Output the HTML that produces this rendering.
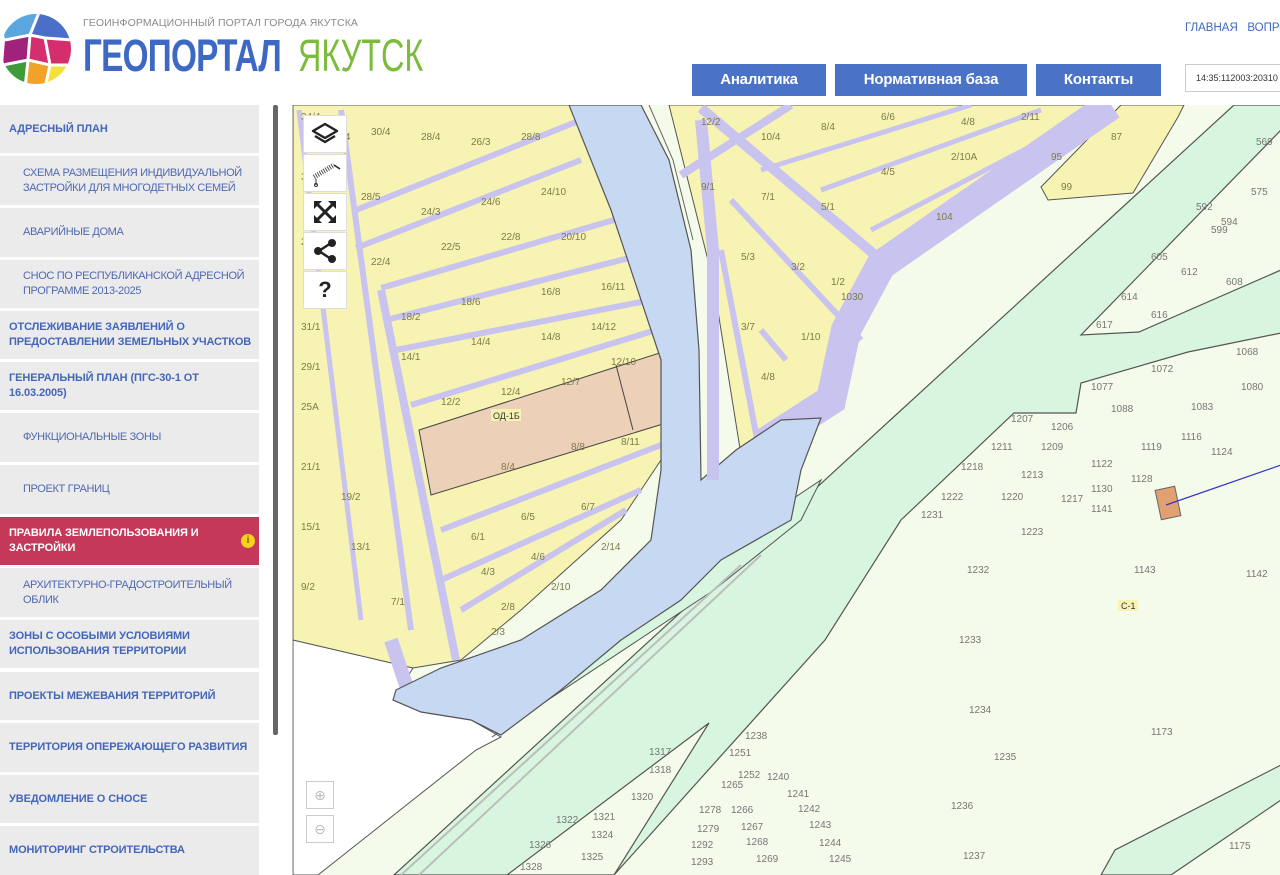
<!DOCTYPE html>
<html><head><meta charset="utf-8"><style>
*{margin:0;padding:0;box-sizing:border-box}
body{width:1280px;height:875px;overflow:hidden;background:#fff;font-family:"Liberation Sans","DejaVu Sans",sans-serif;position:relative}
.abs{position:absolute}
.sub{left:83px;top:17px;font-size:10.5px;color:#8a8a8a;letter-spacing:0.1px}
.geo{left:83px;top:30px;font-size:45px;font-weight:bold;color:#3d69c4;transform:scaleX(0.74);transform-origin:left top;letter-spacing:-1px}
.yak{left:298px;top:30px;font-size:45px;color:#7dbb3c;transform:scaleX(0.72);transform-origin:left top}
.top{left:1185px;top:22px;font-size:11.5px;color:#3d69c4;white-space:nowrap}
.btn{top:64px;height:32px;background:#4a72c6;color:#fff;font-size:15px;font-weight:bold;text-align:center;line-height:32px;letter-spacing:-0.2px}
.inp{left:1185px;top:64px;width:110px;height:28px;border:1px solid #ccc;font-size:9px;line-height:26px;padding-left:10px;color:#333}
.it{position:absolute;left:0;width:259px;background:#ebebeb;color:#4466b8;font-size:11px;display:flex;align-items:center;line-height:15px;white-space:nowrap;overflow:hidden;letter-spacing:-0.35px}
.it.b{font-weight:bold;padding-left:9px;letter-spacing:-0.1px}
.it.s{padding-left:23px;color:#4f68b0}
.it.a{background:#c4385a;color:#fff}
.sb{left:273px;top:105px;width:5px;height:630px;background:#666;border-radius:2px}
.map{left:292px;top:105px;width:988px;height:770px;overflow:hidden;border-left:1px solid #bbb}
.ctl{position:absolute;left:10px;width:44px;height:38px;background:#fff;border:1px solid #ddd}
.zm{position:absolute;left:13px;width:28px;height:28px;background:#fff;border:1px solid #ccc;color:#bbb;font-size:14px;text-align:center;line-height:26px}
svg text{font-family:"Liberation Sans",sans-serif}
</style></head><body>
<svg class="abs" style="left:0;top:10px" width="72" height="78" viewBox="0 0 72 78">
<defs><clipPath id="c"><circle cx="36" cy="39" r="35"/></clipPath></defs>
<g clip-path="url(#c)">
<rect width="72" height="78" fill="#fff"/>
<path d="M0 0H40L30 25L5 30Z" fill="#5aa6df"/>
<path d="M40 0H72V30L45 28L30 25Z" fill="#4a6fc9"/>
<path d="M5 30L30 25L28 50L3 55Z" fill="#a0227a"/>
<path d="M30 25L45 28L72 30V55L50 55L28 50Z" fill="#d52e6e"/>
<path d="M3 55L28 50L25 78H0Z" fill="#3e9b37"/>
<path d="M28 50L50 55L45 78H25Z" fill="#f0a22a"/>
<path d="M50 55L72 55V78H45Z" fill="#f3e03a"/>
<g stroke="#fff" stroke-width="3" fill="none"><path d="M5 30L30 25L45 28L72 30"/><path d="M3 55L28 50L50 55L72 55"/><path d="M40 0L30 25L28 50L25 78"/><path d="M50 55L45 78"/><path d="M45 28L50 55"/></g>
</g></svg>
<div class="abs sub">ГЕОИНФОРМАЦИОННЫЙ ПОРТАЛ ГОРОДА ЯКУТСКА</div>
<div class="abs geo">ГЕОПОРТАЛ</div>
<div class="abs yak">ЯКУТСК</div>
<div class="abs top">ГЛАВНАЯ&nbsp;&nbsp; ВОПРОСЫ</div>
<div class="abs btn" style="left:692px;width:134px">Аналитика</div>
<div class="abs btn" style="left:835px;width:192px">Нормативная база</div>
<div class="abs btn" style="left:1036px;width:125px">Контакты</div>
<div class="abs inp">14:35:112003:20310</div>

<div class="it b" style="top:105px;height:48px">АДРЕСНЫЙ ПЛАН</div>
<div class="it s" style="top:156px;height:49px">СХЕМА РАЗМЕЩЕНИЯ ИНДИВИДУАЛЬНОЙ<br>ЗАСТРОЙКИ ДЛЯ МНОГОДЕТНЫХ СЕМЕЙ</div>
<div class="it s" style="top:208px;height:49px">АВАРИЙНЫЕ ДОМА</div>
<div class="it s" style="top:260px;height:48px">СНОС ПО РЕСПУБЛИКАНСКОЙ АДРЕСНОЙ<br>ПРОГРАММЕ 2013-2025</div>
<div class="it b" style="top:311px;height:48px">ОТСЛЕЖИВАНИЕ ЗАЯВЛЕНИЙ О<br>ПРЕДОСТАВЛЕНИИ ЗЕМЕЛЬНЫХ УЧАСТКОВ</div>
<div class="it b" style="top:362px;height:48px">ГЕНЕРАЛЬНЫЙ ПЛАН (ПГС-30-1 ОТ<br>16.03.2005)</div>
<div class="it s" style="top:413px;height:49px">ФУНКЦИОНАЛЬНЫЕ ЗОНЫ</div>
<div class="it s" style="top:465px;height:49px">ПРОЕКТ ГРАНИЦ</div>
<div class="it b a" style="top:517px;height:48px">ПРАВИЛА ЗЕМЛЕПОЛЬЗОВАНИЯ И<br>ЗАСТРОЙКИ<span style="position:absolute;left:241px;top:17px;width:14px;height:14px;border-radius:50%;background:#f5d21c;color:#7a5a00;font-size:10px;line-height:14px;text-align:center">i</span></div>
<div class="it s" style="top:568px;height:49px">АРХИТЕКТУРНО-ГРАДОСТРОИТЕЛЬНЫЙ<br>ОБЛИК</div>
<div class="it b" style="top:620px;height:48px">ЗОНЫ С ОСОБЫМИ УСЛОВИЯМИ<br>ИСПОЛЬЗОВАНИЯ ТЕРРИТОРИИ</div>
<div class="it b" style="top:672px;height:48px">ПРОЕКТЫ МЕЖЕВАНИЯ ТЕРРИТОРИЙ</div>
<div class="it b" style="top:723px;height:49px">ТЕРРИТОРИЯ ОПЕРЕЖАЮЩЕГО РАЗВИТИЯ</div>
<div class="it b" style="top:775px;height:48px">УВЕДОМЛЕНИЕ О СНОСЕ</div>
<div class="it b" style="top:826px;height:49px">МОНИТОРИНГ СТРОИТЕЛЬСТВА</div>
<div class="abs sb"></div>

<div class="abs map">
<svg width="988" height="770" viewBox="292 105 988 770">
<rect x="292" y="105" width="988" height="770" fill="#f4fbea"/>
<path d="M292 640L412 668L392 700L420 712L470 720L500 737L475 750L317 875L292 875Z" fill="#fff" stroke="#555" stroke-width="1"/>
<path d="M393 875L1233 105L1280 105L1280 130L1080 335L1138 332L1280 270L1280 333L1187 352L1080 383L1075 413L1013 413L900 520L824 640L613 875Z" fill="#d8f5df" stroke="#555" stroke-width="1.2"/>
<path d="M506 875L708 723L613 875Z" fill="#f4fbea" stroke="#555" stroke-width="1.2"/>
<path d="M1100 875L1114 850L1280 765L1280 800L1170 875Z" fill="#d8f5df" stroke="#555" stroke-width="1.2"/>
<path d="M491 737L713 590L800 520L820 480L700 560L560 690Z" fill="#d8f5df" stroke="#555" stroke-width="1"/>
<path d="M400 875L740 565M418 875L760 555" stroke="#bdbdbd" stroke-width="2"/>
<g fill="#f7f3b2" stroke="#555" stroke-width="1">
<path d="M292 105L590 105L610 200L660 330L660 460L620 520L520 610L460 660L412 668L292 640Z"/>
<path d="M668 105L1100 105L895 250L860 300L835 400L740 455L712 280Z"/>
<path d="M1040 187L1047 200L1132 193L1177 117L1183 105L1120 105Z"/>
</g>
<path d="M418 430L668 350L675 420L430 495Z" fill="#ecd0b8" stroke="#444" stroke-width="1"/>
<path d="M615 365L632 430" stroke="#444"/>
<g stroke="#c9c3ef" fill="none">
<path d="M1110 105L880 265L845 330L830 400L760 445" stroke-width="30"/>
<path d="M700 108L880 260" stroke-width="10"/>
<path d="M790 105L680 175" stroke-width="8"/>
<path d="M380 290L455 660" stroke-width="8"/>
<path d="M340 110L410 630" stroke-width="6"/>
<path d="M298 110L360 620" stroke-width="5"/>
<path d="M355 248L580 160" stroke-width="6"/>
<path d="M355 210L580 120" stroke-width="6"/>
<path d="M380 288L630 215" stroke-width="6"/>
<path d="M385 320L640 255" stroke-width="6"/>
<path d="M395 350L650 300" stroke-width="6"/>
<path d="M410 405L655 330" stroke-width="6"/>
<path d="M440 530L660 445" stroke-width="6"/>
<path d="M440 580L640 490" stroke-width="6"/>
<path d="M460 610L625 510" stroke-width="6"/>
<path d="M720 250L760 460" stroke-width="6"/>
<path d="M730 200L860 340" stroke-width="6"/>
<path d="M760 330L785 360" stroke-width="6"/>
<path d="M760 170L970 105" stroke-width="5"/>
<path d="M820 190L1040 110" stroke-width="5"/>
<path d="M870 230L1080 120" stroke-width="5"/>
<path d="M390 640L410 700" stroke-width="14"/>
</g>
<path d="M568 105L640 105L668 160L690 250L698 350L700 480L735 450L780 420L820 418L800 470L790 520L720 560L680 600L620 640L560 690L500 735L470 720L420 712L392 700L395 690L440 668L520 640L600 590L650 540L660 470L660 360L640 300L610 210Z" fill="#c7d8f2" stroke="#555" stroke-width="1.2"/>
<path d="M648 105L672 160L692 240" stroke="#666" fill="none"/>
<path d="M700 120L712 250L712 480" stroke="#c9c3ef" stroke-width="12" fill="none"/>
<g font-size="10" fill="#7d7b4a">
<text x="300" y="120">34/4</text><text x="330" y="140">32/4</text><text x="370" y="135">30/4</text><text x="420" y="140">28/4</text><text x="470" y="145">26/3</text><text x="520" y="140">28/8</text>
<text x="300" y="180">32/3</text><text x="360" y="200">28/5</text><text x="420" y="215">24/3</text><text x="480" y="205">24/6</text><text x="540" y="195">24/10</text>
<text x="300" y="245">24/1</text><text x="370" y="265">22/4</text><text x="440" y="250">22/5</text><text x="500" y="240">22/8</text><text x="560" y="240">20/10</text>
<text x="300" y="330">31/1</text><text x="400" y="320">18/2</text><text x="460" y="305">18/6</text><text x="540" y="295">16/8</text><text x="600" y="290">16/11</text>
<text x="300" y="370">29/1</text><text x="400" y="360">14/1</text><text x="470" y="345">14/4</text><text x="540" y="340">14/8</text><text x="590" y="330">14/12</text>
<text x="300" y="410">25A</text><text x="440" y="405">12/2</text><text x="500" y="395">12/4</text><text x="560" y="385">12/7</text><text x="610" y="365">12/10</text>
<text x="300" y="470">21/1</text><text x="340" y="500">19/2</text><text x="500" y="470">8/4</text><text x="570" y="450">8/8</text><text x="620" y="445">8/11</text>
<text x="300" y="530">15/1</text><text x="350" y="550">13/1</text><text x="470" y="540">6/1</text><text x="520" y="520">6/5</text><text x="580" y="510">6/7</text>
<text x="300" y="590">9/2</text><text x="390" y="605">7/1</text><text x="480" y="575">4/3</text><text x="530" y="560">4/6</text><text x="600" y="550">2/14</text>
<text x="500" y="610">2/8</text><text x="550" y="590">2/10</text><text x="490" y="635">2/3</text>
<text x="700" y="125">12/2</text><text x="760" y="140">10/4</text><text x="820" y="130">8/4</text><text x="880" y="120">6/6</text><text x="960" y="125">4/8</text><text x="1020" y="120">2/11</text>
<text x="700" y="190">9/1</text><text x="760" y="200">7/1</text><text x="820" y="210">5/1</text><text x="880" y="175">4/5</text><text x="950" y="160">2/10A</text><text x="1050" y="160">95</text><text x="1110" y="140">87</text>
<text x="740" y="260">5/3</text><text x="790" y="270">3/2</text><text x="830" y="285">1/2</text><text x="935" y="220">104</text><text x="1060" y="190">99</text>
<text x="740" y="330">3/7</text><text x="800" y="340">1/10</text><text x="840" y="300">1030</text><text x="760" y="380">4/8</text>
</g>
<g font-size="10" fill="#777">
<text x="1255" y="145">569</text><text x="1250" y="195">575</text><text x="1195" y="210">592</text><text x="1220" y="225">594</text><text x="1210" y="233">599</text><text x="1150" y="260">605</text><text x="1180" y="275">612</text><text x="1225" y="285">608</text><text x="1120" y="300">614</text><text x="1150" y="318">616</text><text x="1095" y="328">617</text>
<text x="1090" y="390">1077</text><text x="1150" y="372">1072</text><text x="1235" y="355">1068</text><text x="1110" y="412">1088</text><text x="1190" y="410">1083</text><text x="1240" y="390">1080</text>
<text x="1010" y="422">1207</text><text x="1050" y="430">1206</text><text x="990" y="450">1211</text><text x="1040" y="450">1209</text><text x="1090" y="467">1122</text><text x="1140" y="450">1119</text><text x="1180" y="440">1116</text><text x="1210" y="455">1124</text>
<text x="960" y="470">1218</text><text x="1020" y="478">1213</text><text x="1090" y="492">1130</text><text x="1130" y="482">1128</text><text x="940" y="500">1222</text><text x="1000" y="500">1220</text><text x="1060" y="502">1217</text><text x="1090" y="512">1141</text><text x="920" y="518">1231</text><text x="1020" y="535">1223</text>
<text x="966" y="573">1232</text><text x="1133" y="573">1143</text><text x="1245" y="577">1142</text><text x="958" y="643">1233</text><text x="968" y="713">1234</text><text x="1150" y="735">1173</text><text x="993" y="760">1235</text><text x="950" y="809">1236</text><text x="962" y="859">1237</text><text x="1228" y="849">1175</text>
<text x="744" y="739">1238</text><text x="728" y="756">1251</text><text x="766" y="780">1240</text><text x="737" y="778">1252</text><text x="720" y="788">1265</text><text x="786" y="797">1241</text><text x="698" y="813">1278</text><text x="730" y="813">1266</text><text x="797" y="812">1242</text><text x="696" y="832">1279</text><text x="740" y="830">1267</text><text x="808" y="828">1243</text><text x="690" y="848">1292</text><text x="745" y="845">1268</text><text x="818" y="846">1244</text><text x="690" y="865">1293</text><text x="755" y="862">1269</text><text x="828" y="862">1245</text>
<text x="648" y="755">1317</text><text x="648" y="773">1318</text><text x="630" y="800">1320</text><text x="555" y="823">1322</text><text x="592" y="820">1321</text><text x="590" y="838">1324</text><text x="528" y="848">1326</text><text x="580" y="860">1325</text><text x="519" y="870">1328</text>
</g>
<rect x="1157" y="488" width="20" height="30" fill="#e0a070" stroke="#666" transform="rotate(-12 1167 503)"/>
<path d="M1165 505L1280 465" stroke="#3333cc" stroke-width="1.2"/>
<rect x="490" y="409" width="30" height="12" fill="#f7f3b2"/><text x="492" y="419" font-size="9" fill="#333">ОД-1Б</text>
<rect x="1117" y="600" width="20" height="11" fill="#f7f3b2"/><text x="1120" y="609" font-size="9" fill="#333">С-1</text>
</svg>
<div class="ctl" style="top:10px"><svg width="42" height="36" viewBox="0 0 42 36"><path d="M21 8L33 15L21 22L9 15Z" fill="none" stroke="#222" stroke-width="2.4" stroke-linejoin="round"/><path d="M11 20L21 26L31 20" fill="none" stroke="#222" stroke-width="2.4" stroke-linejoin="round"/></svg></div>
<div class="ctl" style="top:49px"><svg width="42" height="36" viewBox="0 0 42 36"><path d="M10 22L30 10" stroke="#555" stroke-width="5" stroke-dasharray="1 1.3"/><path d="M30 10L36 14" stroke="#222" stroke-width="1.5"/><path d="M12 24L12 30" stroke="#333"/><circle cx="12" cy="30" r="1.5" fill="none" stroke="#333"/></svg></div>
<div class="ctl" style="top:88px"><svg width="42" height="36" viewBox="0 0 42 36"><g fill="#222"><path d="M10 7H18L10 15Z"/><path d="M32 7H24L32 15Z"/><path d="M10 29H18L10 21Z"/><path d="M32 29H24L32 21Z"/></g><path d="M12 9L30 27M30 9L12 27" stroke="#222" stroke-width="3"/></svg></div>
<div class="ctl" style="top:127px"><svg width="42" height="36" viewBox="0 0 42 36"><path d="M27 10L15 18L27 26" stroke="#222" stroke-width="2.5" fill="none"/><circle cx="28" cy="10" r="4" fill="#222"/><circle cx="14" cy="18" r="4" fill="#222"/><circle cx="28" cy="26" r="4" fill="#222"/></svg></div>
<div class="ctl" style="top:166px;text-align:center;font-size:22px;font-weight:bold;line-height:36px;color:#222">?</div>
<div class="zm" style="top:676px">⊕</div>
<div class="zm" style="top:710px">⊖</div>
</div>
</body></html>
